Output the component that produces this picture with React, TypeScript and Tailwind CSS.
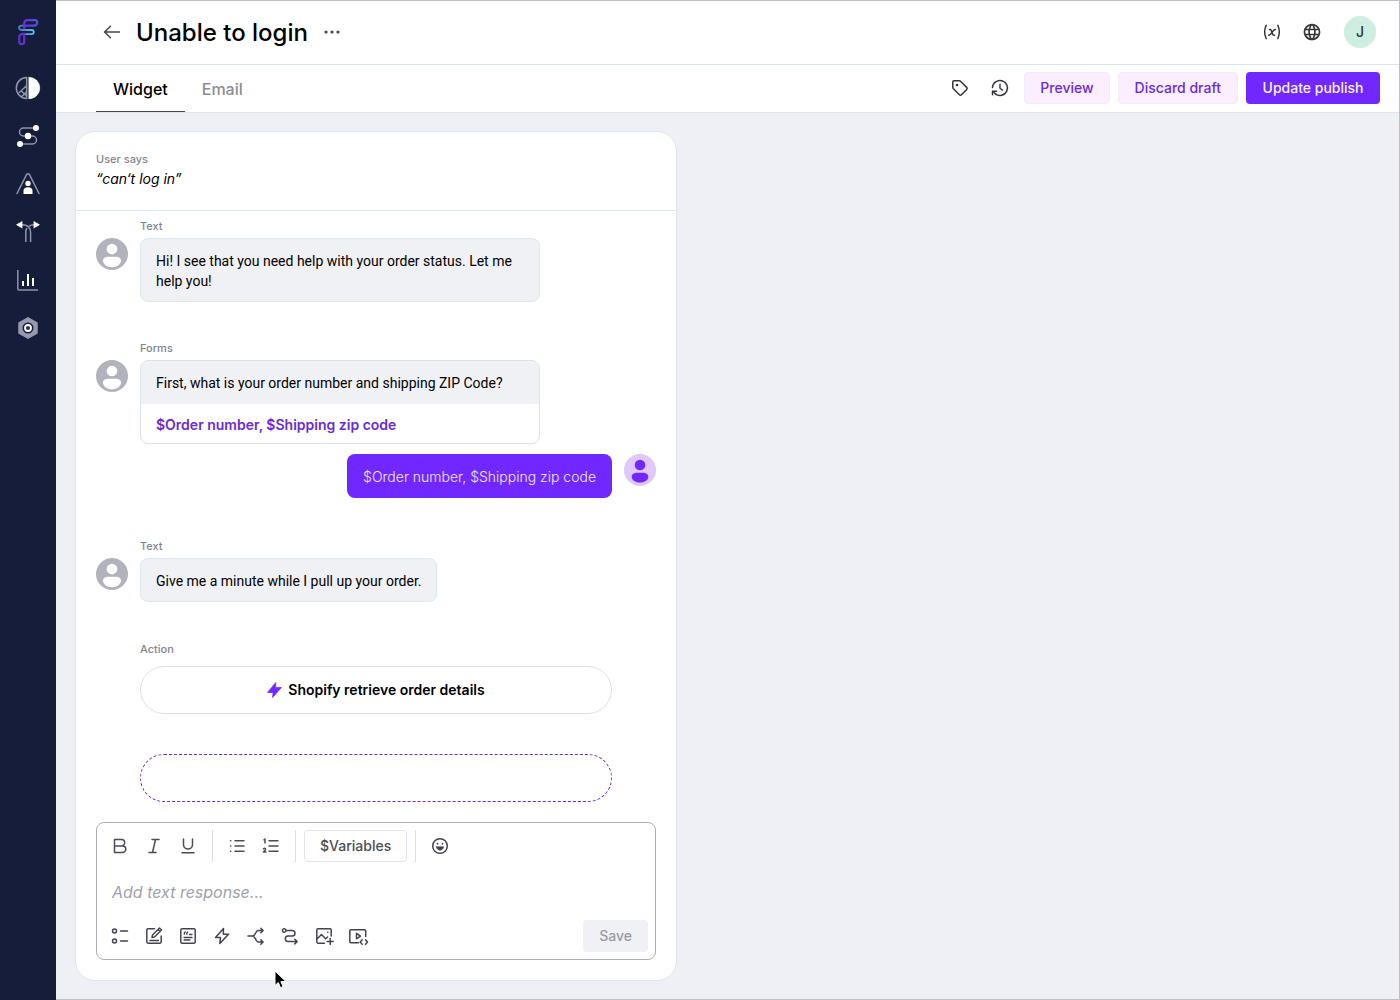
import type { ReactNode } from "react";
import { MdLanguage } from "react-icons/md";
import { TbVariable } from "react-icons/tb";

const line = {
  fill: "none",
  stroke: "currentColor",
  strokeWidth: 1.5,
  strokeLinecap: "round" as const,
  strokeLinejoin: "round" as const,
};

function Glyph({ children, size = 24 }: { children: ReactNode; size?: number }) {
  return (
    <svg width={size} height={size} viewBox={`0 0 ${size} ${size}`} aria-hidden="true" {...line}>
      {children}
    </svg>
  );
}

function Logo() {
  return (
    <svg width="32" height="32" viewBox="0 0 32 32" fill="none" strokeWidth="2.200" strokeLinecap="round" aria-hidden="true">
      <defs>
        <linearGradient id="violetBlue" x1="0" x2="1">
          <stop offset="0" stopColor="#6a2fd8" />
          <stop offset="1" stopColor="#4a55e0" />
        </linearGradient>
        <linearGradient id="tealBlue" x1="0" x2="1">
          <stop offset="0" stopColor="#3a86b0" />
          <stop offset="1" stopColor="#5cbdea" />
        </linearGradient>
      </defs>
      <path d="M12.200 9.600H10c-4 0-4 4.400 0 4.400h9.500c3 0 3 4.200 0 4.200H13" stroke="url(#tealBlue)" strokeWidth="1.800" />
      <path d="M12.200 12.500V7.700c0-2.200 1.200-3.500 3.300-3.500H23c3.600 0 2.600 5.400-1 5.400h-9" stroke="url(#violetBlue)" />
      <path d="M12.200 17.500v8c0 3.600-5 3.600-5 0v-4c0-2.400 1.300-3.600 4-3.600" stroke="#6231c8" />
    </svg>
  );
}

const navItems = [
  {
    label: "Overview",
    icon: (
      <>
        <path d="M17 5.200a10.800 10.800 0 0 1 0 21.600z" fill="#fff" stroke="#fff" strokeWidth="0.500" />
        <path d="M14.700 5.600a10.400 10.400 0 0 0 0 20.800zM14.700 13.500 7.300 20.500M14.700 19.600l-4.900 4.900M10 19.500l4.500 4.500" stroke="#8f93a8" />
      </>
    ),
  },
  {
    label: "Flows",
    icon: (
      <>
        <path d="M24 8H11.500a4 4 0 0 0 0 8h9a4 4 0 0 1 0 8H8" stroke="#8f93a8" />
        <circle cx="24" cy="8" r="3" fill="#fff" stroke="none" />
        <circle cx="16" cy="16" r="3.200" fill="#fff" stroke="none" />
        <circle cx="8" cy="24" r="3" fill="#fff" stroke="none" />
      </>
    ),
  },
  {
    label: "Audience",
    icon: (
      <>
        <path d="m5 25.500 9.400-18.700c.700-1.300 2.500-1.300 3.200 0L27 25.500" stroke="#8f93a8" />
        <circle cx="16" cy="15.400" r="2.700" fill="#fff" stroke="none" />
        <path d="M11.500 26v-3a4.500 3.700 0 0 1 9 0v3z" fill="#fff" stroke="none" />
      </>
    ),
  },
  {
    label: "Routing",
    icon: (
      <>
        <path d="M10 8.800c5 0 8.600 2 8.600 8V26M22 8.800c-2 0-3.600.400-5 1.400M13.800 26V16c0-1.600.400-2.900 1.200-4" stroke="#8f93a8" strokeLinecap="butt" />
        <path d="m4 8.800 6.400-3.800v7.600zM28 8.800 21.600 5v7.600z" fill="#fff" stroke="none" />
      </>
    ),
  },
  {
    label: "Analytics",
    icon: (
      <>
        <path d="M5.800 6v18.500a1.500 1.500 0 0 0 1.500 1.500H26" stroke="#8f93a8" strokeLinecap="butt" />
        <path d="M11 17v5M16 10v12M21 14v8" stroke="#fff" strokeWidth="2" strokeLinecap="butt" />
      </>
    ),
  },
  {
    label: "Settings",
    icon: (
      <>
        <path d="m16 5.800 9 5v10.400l-9 5-9-5V10.800z" fill="#9799ad" stroke="#9799ad" />
        <circle cx="16" cy="16" r="3.200" fill="#8a8da0" stroke="#151d3b" strokeWidth="4.600" />
        <circle cx="16" cy="16" r="3" fill="#303650" stroke="#fff" strokeWidth="1.800" />
      </>
    ),
  },
];

function Avatar({ user = false }: { user?: boolean }) {
  const tone = user ? "#7127ff" : "#fff";
  return (
    <svg className="shrink-0" width="32" height="32" viewBox="0 0 32 32" aria-hidden="true">
      <circle cx="16" cy="16" r="16" fill={user ? "#dec8fc" : "#b2b2bd"} />
      <circle cx="16" cy="11" r="5.300" fill={tone} />
      <path
        d={
          user
            ? "M13 18.800h6c3 0 5.300 1.600 5.300 4 0 3.600-4.300 5.800-8.300 5.800s-8.300-2.200-8.300-5.800c0-2.400 2.300-4 5.300-4z"
            : "M12.500 18.800h7c3 0 5.500 1.200 5.500 3.600 0 4-4.500 6.800-9 6.800s-9-2.800-9-6.800c0-2.400 2.500-3.600 5.500-3.600z"
        }
        fill={tone}
      />
    </svg>
  );
}

function Label({ children }: { children: ReactNode }) {
  return <p className="text-[11px] leading-4 font-medium text-[#84858f]">{children}</p>;
}

function BotMessage({ label, children }: { label: string; children: ReactNode }) {
  return (
    <div className="flex gap-3">
      <div className="pt-5">
        <Avatar />
      </div>
      <div className="flex flex-col items-start gap-1">
        <Label>{label}</Label>
        {children}
      </div>
    </div>
  );
}

const formatTools = [
  [
    { label: "Bold", d: "M6.500 5.500h7a3.200 3.200 0 0 1 0 6.400h-7zM6.500 11.900h8a3.300 3.300 0 0 1 0 6.600h-8z" },
    { label: "Italic", d: "M10 5.500h7M7 18.500h7M13.500 5.500l-3 13" },
    { label: "Underline", d: "M7.500 5v5.500a4.500 4.500 0 0 0 9 0V5M6 18.800h12" },
  ],
  [
    { label: "Bulleted list", d: "M10 6.800h9M10 12h9M10 17.200h9M5.500 6.800h.3M5.500 12h.3M5.500 17.200h.3" },
    { label: "Numbered list", d: "M10 6.800h9M10 12h9M10 17.200h9M5 5.800l1-.8v4M4.500 14.800c1-1 2.500-.3 2 .9L4.500 18h2.500" },
  ],
];

const insertTools = [
  {
    label: "Quick replies",
    icon: <path d="M4.500 7a2 2 0 1 0 4 0 2 2 0 1 0-4 0M4.500 17a2 2 0 1 0 4 0 2 2 0 1 0-4 0M12.500 7h7M12.500 17h7" />,
  },
  {
    label: "Form",
    icon: (
      <path d="M12.500 4.800H6A1.300 1.300 0 0 0 4.800 6v12A1.300 1.300 0 0 0 6 19.200h12a1.300 1.300 0 0 0 1.200-1.200v-6M8 16.500h8.500M10 13.500l.5-2.500 7-7 2 2-7 7zM16 5.500l2 2" />
    ),
  },
  {
    label: "Article",
    icon: (
      <>
        <rect x="4.800" y="4.800" width="14.400" height="14.400" rx="1.500" />
        <path d="M8 13.500h8M8 16h6M8.300 10.300V9l.8-1M10.800 10.300V9l.8-1M13.500 10.500H16" strokeWidth="1.300" />
      </>
    ),
  },
  { label: "Action", icon: <path d="M13.500 4.500 5.500 13.500h5l-.7 6 8.700-9.300h-5.200z" /> },
  {
    label: "Branch",
    icon: <path d="M4 12h4.500c3.500 0 2.500-5.500 6-5.500h4.500M8.500 12c3.500 0 2.500 6 6 6h4.500M16.800 4.200l2.300 2.300-2.300 2.300M16.800 15.700l2.300 2.300-2.300 2.300" />,
  },
  {
    label: "Go to flow",
    icon: <path d="M4.500 6.500a1.700 1.700 0 1 0 3.400 0 1.700 1.700 0 1 0-3.400 0M8 6.500h6.200a2.800 2.800 0 0 1 0 5.600H10a2.700 2.700 0 0 0 0 5.400h9M16.800 15.200l2.400 2.300-2.400 2.400" />,
  },
  {
    label: "Image",
    icon: <path d="M12.500 19.200H6A1.300 1.300 0 0 1 4.800 18V6A1.300 1.300 0 0 1 6 4.800h12A1.300 1.300 0 0 1 19.200 6v6M5 15l4.500-4.500 4.200 4.200 1.800-1.700M15.700 8.300h.2M18.200 14.500v6M15.200 17.500h6" />,
  },
  {
    label: "Video",
    icon: <path d="M12.500 18.800H5A1.200 1.200 0 0 1 3.800 17.600V7A1.200 1.200 0 0 1 5 5.800h13.500A1.200 1.200 0 0 1 19.700 7v5.500M10.500 9.300v5.500l4-2.700zM16.200 15.800 14.200 18l2 2.200M19.500 15.800l2 2.200-2 2.200" />,
  },
];

function Divider() {
  return <div className="h-8 w-px bg-[#dbdbe3]" />;
}

function Composer() {
  return (
    <form className="rounded-lg border border-[#aeaeb8] bg-white p-[7px]">
      <div className="flex items-center">
        <div className="ml-1 flex gap-2.5 pr-3">
          {formatTools[0].map((t) => (
            <button key={t.label} type="button" aria-label={t.label} className="text-[#4c4d57]">
              <Glyph>
                <path d={t.d} />
              </Glyph>
            </button>
          ))}
        </div>
        <Divider />
        <div className="flex gap-2.5 px-3">
          {formatTools[1].map((t) => (
            <button key={t.label} type="button" aria-label={t.label} className="text-[#4c4d57]">
              <Glyph>
                <path d={t.d} />
              </Glyph>
            </button>
          ))}
        </div>
        <Divider />
        <button type="button" className="mx-2 h-8 rounded border border-[#dfe4ec] px-[15px] text-sm font-medium text-[#4c4d57]">
          $Variables
        </button>
        <Divider />
        <button type="button" aria-label="Emoji" className="ml-3 text-[#43444e]">
          <Glyph>
            <circle cx="12" cy="12" r="7.300" />
            <path d="M9.500 9.500v.4M14.500 9.500v.4" strokeWidth="1.600" />
            <path d="M8.300 12.800h7.400c-.6 2.400-2 3.400-3.700 3.400s-3.100-1-3.700-3.400z" fill="currentColor" strokeWidth="0.600" />
          </Glyph>
        </button>
      </div>
      <input
        aria-label="Text response"
        placeholder="Add text response..."
        className="mt-4 block h-7 w-full px-2 text-base italic outline-none placeholder:text-[#a0a1aa]"
      />
      <div className="mt-[14px] flex items-center justify-between">
        <div className="ml-1 flex gap-2.5">
          {insertTools.map((t) => (
            <button key={t.label} type="button" aria-label={t.label} className="text-[#43444e]">
              <Glyph>{t.icon}</Glyph>
            </button>
          ))}
        </div>
        <button type="submit" className="h-8 rounded bg-[#f0f1f5] px-4 text-sm font-medium text-[#9a9ba5]">
          Save
        </button>
      </div>
    </form>
  );
}

function Conversation() {
  return (
    <section className="relative w-[602px] max-w-full rounded-[20px] border border-[#dfe5ec] bg-white">
      <header className="border-b border-[#dae6ec] px-5 pt-[19px] pb-[21px]">
        <Label>User says</Label>
        <p className="mt-[2px] text-sm leading-5 italic">“can‘t log in”</p>
      </header>
      <div className="px-5 pt-[7px] pb-5">
        <BotMessage label="Text">
          <p className="w-[400px] rounded-lg border border-[#dce6ec] bg-[#f0f1f5] px-[15px] pt-3 pb-[10px] font-['Roboto',sans-serif] text-[14px] leading-5">
            Hi! I see that you need help with your order status. Let me help you!
          </p>
        </BotMessage>
        <div className="mt-[38px]">
          <BotMessage label="Forms">
            <div className="w-[400px] overflow-hidden rounded-lg border border-[#dce2ea] text-sm leading-5">
              <p className="bg-[#f0f1f5] px-[15px] pt-3 pb-[11px] font-['Roboto',sans-serif]">
                First, what is your order number and shipping ZIP Code?
              </p>
              <p className="px-[15px] pt-[11px] pb-2 font-semibold text-[#6a2bd6]">$Order number, $Shipping zip code</p>
            </div>
          </BotMessage>
        </div>
        <div className="mt-[10px] flex justify-end gap-3">
          <p className="rounded-lg bg-[#7127ff] px-4 pt-[13px] pb-[11px] text-sm leading-5 font-light text-[#f3eaff]">
            $Order number, $Shipping zip code
          </p>
          <Avatar user />
        </div>
        <div className="mt-10">
          <BotMessage label="Text">
            <p className="rounded-lg border border-[#dce6ec] bg-[#f0f1f5] px-[15px] pt-3 pb-[10px] font-['Roboto',sans-serif] text-[14px] leading-5">
              Give me a minute while I pull up your order.
            </p>
          </BotMessage>
        </div>
        <div className="mt-[39px] mr-11 ml-11">
          <Label>Action</Label>
          <button
            type="button"
            className="mt-[9px] flex h-12 w-full items-center justify-center gap-1.5 rounded-full border border-[#dfdfe8] text-sm font-semibold"
          >
            <svg width="15" height="16" viewBox="0 0 15 16" fill="#7127ff" stroke="#7127ff" strokeWidth="0.800" strokeLinejoin="round" aria-hidden="true">
              <path d="M8.800.5.5 10.500h5.600l-.5 5L14.300 5.600H8.500z" />
            </svg>
            Shopify retrieve order details
          </button>
          <div className="mt-10 h-12 rounded-full border border-dashed border-[#6a2bd6]" />
        </div>
        <div className="mt-5">
          <Composer />
        </div>
      </div>
      <svg className="absolute bottom-[-10px] left-[198px]" width="14" height="20" viewBox="0 0 14 20" aria-hidden="true">
        <path d="M1 1v14.500l3.300-3 2.200 5.200 2.600-1.100-2.200-5H12z" fill="#000" stroke="#fff" strokeWidth="1" />
      </svg>
    </section>
  );
}

export default function App() {
  return (
    <div className="flex min-h-screen bg-[#eff0f5] font-['Inter',sans-serif] text-black">
      <nav aria-label="Main" className="flex w-14 shrink-0 flex-col items-center gap-4 bg-[#151d3b] pt-4">
        <a href="#home" aria-label="Home">
          <Logo />
        </a>
        <ul className="mt-2 flex flex-col gap-4">
          {navItems.map((n) => (
            <li key={n.label}>
              <a href={"#" + n.label.toLowerCase()} aria-label={n.label} className="block">
                <Glyph size={32}>{n.icon}</Glyph>
              </a>
            </li>
          ))}
        </ul>
      </nav>
      <div className="flex min-w-0 flex-1 flex-col border-t border-r border-b border-[#c0c0c4]">
        <header className="flex h-16 items-center border-b border-[#dbe5ee] bg-white pr-[23px] pb-px pl-11">
          <button type="button" aria-label="Back" className="text-[#43444e]">
            <Glyph>
              <path d="M19.500 12H4.500M10.500 6.300 4.500 12l6 5.700" />
            </Glyph>
          </button>
          <h1 className="ml-3 pt-px text-2xl font-medium">Unable to login</h1>
          <button type="button" aria-label="More options" className="ml-3 text-[#43444e]">
            <Glyph>
              <path d="M6 12h.01M12 12h.01M18 12h.01" strokeWidth="3.200" />
            </Glyph>
          </button>
          <div className="ml-auto flex items-center gap-5 text-[#33343d]">
            <button type="button" aria-label="Variables">
              <TbVariable size={20} strokeWidth={1.8} />
            </button>
            <button type="button" aria-label="Language">
              <MdLanguage size={20} />
            </button>
            <button type="button" className="ml-[2px] size-8 rounded-full bg-[#cdeee0] text-sm font-medium">
              J
            </button>
          </div>
        </header>
        <div className="flex h-12 items-center border-b border-[#dbe5ee] bg-white pr-[19px] pl-10">
          <div role="tablist" className="flex h-full">
            <button type="button" role="tab" aria-selected="true" className="border-b border-[#43444e] px-[17px] pt-px font-medium">
              Widget
            </button>
            <button type="button" role="tab" aria-selected="false" className="px-[17px] font-medium text-[#8c8d96]">
              Email
            </button>
          </div>
          <div className="ml-auto flex items-center gap-2 pb-px text-sm font-medium">
            <button type="button" aria-label="Tags" className="mr-2 text-[#33343d]">
              <Glyph>
                <path d="M4.800 5.800a1 1 0 0 1 1-1h5.700a1.500 1.500 0 0 1 1 .4l6.200 6.200a1.500 1.500 0 0 1 0 2.100l-5.200 5.200a1.500 1.500 0 0 1-2.100 0l-6.200-6.200a1.500 1.500 0 0 1-.4-1z" />
                <circle cx="9" cy="9" r="1.300" fill="currentColor" stroke="none" />
              </Glyph>
            </button>
            <button type="button" aria-label="History" className="mr-1 text-[#33343d]">
              <Glyph>
                <path d="M4.500 11.500a7.500 7.500 0 1 1 2.800 6.300M4.500 18.800v-3.600h4" />
                <path d="M4.800 15.500 8 18.200M12 8.300v4l2.500 1.800" strokeWidth="1.400" />
              </Glyph>
            </button>
            <button type="button" className="h-8 rounded border border-[#f1edf7] bg-[#fbeefe] px-[15px] text-[#6a2bd6]">
              Preview
            </button>
            <button type="button" className="h-8 rounded border border-[#f1edf7] bg-[#fbeefe] px-4 text-[#6a2bd6]">
              Discard draft
            </button>
            <button type="button" className="h-8 min-w-[134px] rounded bg-[#7127ff] px-4 text-[#f7f2ff]">
              Update publish
            </button>
          </div>
        </div>
        <main className="flex-1 px-[19px] pt-[18px] pb-4">
          <Conversation />
        </main>
      </div>
    </div>
  );
}
